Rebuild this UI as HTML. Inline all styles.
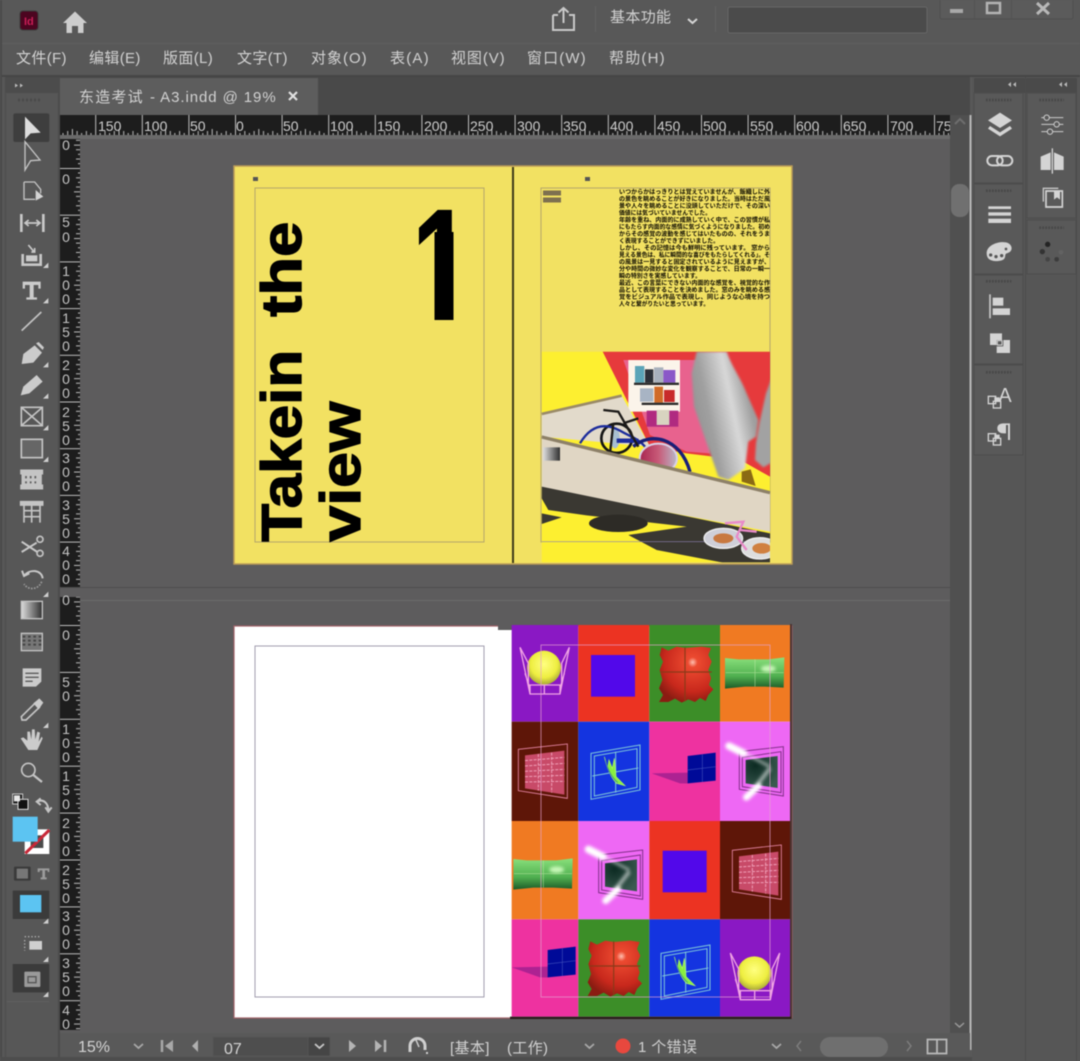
<!DOCTYPE html>
<html><head><meta charset="utf-8"><title>InDesign</title>
<style>
html,body{margin:0;padding:0;background:#5a5a5a;width:1080px;height:1061px;overflow:hidden}
svg{display:block;filter:blur(.45px)}
text{font-family:"Liberation Sans","Noto Sans CJK SC",sans-serif}
.m{font-size:15px;fill:#d2d2d2;letter-spacing:.35px}
.r{font-size:14px;fill:#cfcfcf}
.v{font-size:14px;fill:#c4c4c4;text-anchor:middle}
.j{font-size:6px;fill:#0c0a00;font-family:"Liberation Sans","Noto Sans CJK JP",sans-serif;font-weight:bold}
.i{fill:#cbcbcb}
.o{fill:none;stroke:#c4c4c4;stroke-width:5}
.t{fill:#d4d4d4}
.g{fill:none;stroke:#474747;stroke-width:8;stroke-dasharray:5 4}
</style></head><body>
<svg xmlns="http://www.w3.org/2000/svg" width="1080" height="1061" viewBox="0 0 1080 1061">
<defs>
<pattern id="pt" patternUnits="userSpaceOnUse" x="235" y="115" width="46.6" height="20">
<rect width="46.6" height="20" fill="#1d1d1d"/>
<path d="M.5 0V20M9.8 16V20M19.1 16V20M28.5 16V20M37.8 16V20M5 18V20M14.4 18V20M23.8 14V20M33 18V20M42.4 18V20" stroke="#bdbdbd" fill="none"/>
</pattern>
<pattern id="pl1" patternUnits="userSpaceOnUse" x="60" y="168" width="20" height="46.7">
<rect width="20" height="46.7" fill="#1d1d1d"/>
<path d="M0 .5H20M16 9.8H20M16 19H20M14 23.8H20M16 28.5H20M16 37.8H20M18 5H20M18 14.4H20M18 33H20M18 42.4H20" stroke="#bdbdbd" fill="none"/>
</pattern>
<pattern id="pl2" patternUnits="userSpaceOnUse" x="60" y="625" width="20" height="46.9">
<rect width="20" height="46.9" fill="#1d1d1d"/>
<path d="M0 .5H20M16 9.8H20M16 19H20M14 23.8H20M16 28.5H20M16 37.8H20M18 5H20M18 14.4H20M18 33H20M18 42.4H20" stroke="#bdbdbd" fill="none"/>
</pattern>
<clipPath id="ctop"><rect x="60" y="115" width="890" height="20"/></clipPath>
<clipPath id="cill"><rect x="95" y="575" width="685" height="632"/></clipPath>
<clipPath id="cone"><rect x="400" y="200" width="53.500" height="60"/></clipPath>
<filter id="soft" x="-30%" y="-30%" width="160%" height="160%"><feGaussianBlur stdDeviation="4.500"/></filter>
<filter id="soft3" x="-10%" y="-10%" width="120%" height="120%"><feGaussianBlur stdDeviation="3"/></filter>
<radialGradient id="sph" cx=".5" cy=".4" r=".6"><stop offset="0" stop-color="#ffff80"/><stop offset=".65" stop-color="#eeee40"/><stop offset="1" stop-color="#a8a838"/></radialGradient>
<radialGradient id="pil" cx=".62" cy=".28" r=".75"><stop offset="0" stop-color="#ffc0b0"/><stop offset=".12" stop-color="#ec4a30"/><stop offset=".7" stop-color="#c8281c"/><stop offset="1" stop-color="#8a1c12"/></radialGradient>
<linearGradient id="gp" x1="0" y1="0" x2="0" y2="1"><stop offset="0" stop-color="#8ae07c"/><stop offset=".6" stop-color="#50b050"/><stop offset="1" stop-color="#1c5a28"/></linearGradient>
<linearGradient id="gr" x1="0" x2="1"><stop offset="0" stop-color="#dcdcdc"/><stop offset="1" stop-color="#303030"/></linearGradient>
<linearGradient id="gw" x1="0" y1=".7" x2="1" y2=".3"><stop offset="0" stop-color="#8e8e8e"/><stop offset=".3" stop-color="#a0a0a0"/><stop offset=".62" stop-color="#d8d8d8"/><stop offset=".85" stop-color="#a0a0a0"/><stop offset="1" stop-color="#989898"/></linearGradient>
<radialGradient id="dk" cx=".3" cy=".3" r=".8"><stop offset="0" stop-color="#0c2a22"/><stop offset="1" stop-color="#3a5a50"/></radialGradient>
<linearGradient id="ball" x1="0" x2="1"><stop offset="0" stop-color="#a82650"/><stop offset=".5" stop-color="#c85a78"/><stop offset="1" stop-color="#b8b8c8"/></linearGradient>
<g id="sphere">
<circle cx="117" cy="143" r="51" fill="url(#sph)"/>
<path d="M45 82L75 222H165L193 82L170 130V195H70V130ZM75 222V195M165 222V195M60 160L75 205M178 160L165 205M118 195V222" fill="none" stroke="#f0a4e4" stroke-width="4"/>
</g>
<rect id="psq" x="258" y="105" width="132" height="125" fill="#5208ea"/>
<g id="rpil">
<path d="M470 82L490 92L515 80L540 84L590 80L618 84L610 105L620 125L610 150L618 175L612 195L625 208L610 225L602 243L585 234L570 246L550 238L530 248L510 236L490 246L462 246L474 225L462 205L472 180L464 150L474 125L464 105Z" fill="url(#pil)"/>
<path d="M540 82V244M466 156H620" stroke="#8a3a18" stroke-width="3.500" fill="none"/>
</g>
<g id="gpil"><path d="M660 114L700 118L790 118L838 112L836 203L780 200L720 200L660 206Z" fill="url(#gp)"/><ellipse cx="790" cy="146" rx="22" ry="10" fill="#c8f8b8" filter="url(#soft)"/><path d="M662 158H836M750 118V200" stroke="#c0e8a8" stroke-width="2" fill="none" opacity=".7"/></g>
<g id="brick">
<path d="M40 388L187 372V535L40 512Z" fill="none" stroke="#e888a8" stroke-width="2.500"/>
<path d="M60 406L178 392V524L60 505Z" fill="#c84a68"/>
<path d="M60 422L178 412M60 438L178 430M60 454L178 448M60 470L178 466M60 486L178 484M100 402V512M140 398V518" stroke="#f0a0b8" stroke-width="3" stroke-dasharray="9 4" fill="none"/>
</g>
<g id="bwin">
<path d="M258 400L405 375V510L258 538ZM268 408L396 386V502L268 528ZM332 395V518M262 468L400 444" fill="none" stroke="#80c8d8" stroke-width="3"/>
<path d="M298 410C305 440 315 470 335 490L360 497L350 487L333 470L328 415L322 445L312 420L308 445Z" fill="#88ee40" stroke="#b0ff60" stroke-width="2"/>
<path d="M302 420C308 450 320 472 338 488" stroke="#2c6ca0" stroke-width="2" fill="none"/>
</g>
<g id="dwin">
<path d="M440 460L550 458V490L632 492L525 490Z" fill="#8a1a8a" opacity=".65"/>
<path d="M548 408L632 398V482L548 490Z" fill="#000a98"/>
<path d="M592 403V486M548 450L632 440" stroke="#3848b8" stroke-width="2" fill="none"/>
</g>
<g id="lwin">
<path d="M703 395L835 380V528L703 508Z" fill="none" stroke="#803088" stroke-width="3"/>
<path d="M712 412L828 395V518L712 500Z" fill="none" stroke="#803088" stroke-width="3"/>
<path d="M722 420L818 408V504L722 490Z" fill="url(#dk)"/>
<g filter="url(#soft)">
<path d="M720 400L795 440" stroke="#fff" stroke-width="8" fill="none" opacity=".55"/>
<path d="M672 378L716 400" stroke="#fff" stroke-width="22" stroke-linecap="round"/>
<path d="M795 445L760 490" stroke="#fff" stroke-width="12" fill="none" opacity=".55"/>
<path d="M760 498L724 532" stroke="#fff" stroke-width="20" stroke-linecap="round"/>
</g>
</g>
<g id="tri"><path d="M0 0L-16 16H0Z" fill="#cfcfcf"/></g>
</defs>

<!-- base -->
<rect width="1080" height="1061" fill="#585858"/>
<rect y="43" width="1080" height="1" fill="#5f5f5f"/>
<rect y="75" width="1080" height="2" fill="#464646"/>
<rect x="0" y="0" width="2" height="1061" fill="#4a4a4a"/>

<!-- title bar -->
<rect x="20" y="11" width="18" height="19" rx="3" fill="#4c0520" stroke="#3a3a3a"/>
<text x="24" y="25" font-size="11" font-weight="bold" fill="#c81e56">Id</text>
<path d="M75 11.500L87 23H83.500V33H78V26H72V33H66.500V23H63Z" fill="#cdcdcd"/>
<path d="M553 15H558M569 15H574V30H553V15M563.500 23V8M558.500 12.500L563.500 8L568.500 12.500" fill="none" stroke="#c8c8c8" stroke-width="2"/>
<rect x="595" y="6" width="1" height="26" fill="#636363"/>
<text x="610" y="22" class="m">基本功能</text>
<path d="M688 19L692.500 23L697 19" fill="none" stroke="#d4d4d4" stroke-width="2"/>
<rect x="715" y="6" width="1" height="26" fill="#636363"/>
<rect x="728" y="7" width="199" height="26" rx="2" fill="#4b4b4b" stroke="#676767"/>
<rect x="940" y="-2" width="133" height="21" rx="2" fill="#5b5b5b" stroke="#4e4e4e"/>
<path d="M974.500 0V19M1011.500 0V19" stroke="#525252"/>
<rect x="950" y="9" width="13" height="4" fill="#a8a8a8"/>
<rect x="987" y="3" width="13" height="10" fill="none" stroke="#b4b4b4" stroke-width="2.500"/>
<path d="M1037 3L1049 14M1049 3L1037 14" stroke="#b8b8b8" stroke-width="3"/>

<!-- menu -->
<text x="16" y="63" class="m">文件(F)</text>
<text x="89" y="63" class="m">编辑(E)</text>
<text x="163" y="63" class="m">版面(L)</text>
<text x="237" y="63" class="m">文字(T)</text>
<text x="311" y="63" class="m" textLength="56">对象(O)</text>
<text x="390" y="63" class="m" textLength="39">表(A)</text>
<text x="451" y="63" class="m" textLength="54">视图(V)</text>
<text x="527" y="63" class="m" textLength="59">窗口(W)</text>
<text x="609" y="63" class="m" textLength="56">帮助(H)</text>

<!-- tab bar -->
<rect x="60" y="77" width="910" height="38" fill="#494949"/>
<rect x="60" y="78" width="258" height="37" fill="#5d5d5d"/>
<text x="79" y="102" class="m" textLength="64">东造考试</text>
<text x="150" y="102" class="m" textLength="126">- A3.indd @ 19%</text>
<path d="M289 92L297 100M297 92L289 100" stroke="#e0e0e0" stroke-width="2.200"/>

<!-- pasteboard -->
<rect x="60" y="135" width="890" height="898" fill="#5d5c5d"/>
<rect x="60" y="135" width="890" height="4" fill="#6a6a6a"/>
<rect x="60" y="587" width="890" height="1" fill="#4d4d4d"/>
<rect x="60" y="600" width="890" height="1" fill="#6b6b6b"/>

<!-- top ruler -->
<rect x="60" y="115" width="890" height="20" fill="url(#pt)"/>
<g clip-path="url(#ctop)">
<text x="98" y="131" class="r">150</text><text x="144" y="131" class="r">100</text><text x="190" y="131" class="r">50</text><text x="236" y="131" class="r">0</text><text x="283" y="131" class="r">50</text><text x="330" y="131" class="r">100</text><text x="377" y="131" class="r">150</text><text x="424" y="131" class="r">200</text><text x="470" y="131" class="r">250</text><text x="517" y="131" class="r">300</text><text x="563" y="131" class="r">350</text><text x="610" y="131" class="r">400</text><text x="657" y="131" class="r">450</text><text x="703" y="131" class="r">500</text><text x="750" y="131" class="r">550</text><text x="796" y="131" class="r">600</text><text x="843" y="131" class="r">650</text><text x="890" y="131" class="r">700</text><text x="936" y="131" class="r">750</text>
</g>

<!-- left rulers -->
<rect x="60" y="139" width="20" height="448" fill="url(#pl1)"/>
<rect x="60" y="597" width="20" height="433" fill="url(#pl2)"/>
<g class="vv">
<text x="66" y="150" class="v">0</text><text x="66" y="184" class="v">0</text>
<text x="66" y="227" class="v">5</text><text x="66" y="242" class="v">0</text>
<text x="66" y="276" class="v">1</text><text x="66" y="290" class="v">0</text><text x="66" y="304" class="v">0</text>
<text x="66" y="323" class="v">1</text><text x="66" y="337" class="v">5</text><text x="66" y="351" class="v">0</text>
<text x="66" y="370" class="v">2</text><text x="66" y="384" class="v">0</text><text x="66" y="398" class="v">0</text>
<text x="66" y="417" class="v">2</text><text x="66" y="431" class="v">5</text><text x="66" y="445" class="v">0</text>
<text x="66" y="463" class="v">3</text><text x="66" y="477" class="v">0</text><text x="66" y="491" class="v">0</text>
<text x="66" y="510" class="v">3</text><text x="66" y="524" class="v">5</text><text x="66" y="538" class="v">0</text>
<text x="66" y="556" class="v">4</text><text x="66" y="570" class="v">0</text><text x="66" y="584" class="v">0</text>
<text x="66" y="605" class="v">0</text><text x="66" y="640" class="v">0</text>
<text x="66" y="687" class="v">5</text><text x="66" y="701" class="v">0</text>
<text x="66" y="734" class="v">1</text><text x="66" y="748" class="v">0</text><text x="66" y="762" class="v">0</text>
<text x="66" y="781" class="v">1</text><text x="66" y="795" class="v">5</text><text x="66" y="809" class="v">0</text>
<text x="66" y="828" class="v">2</text><text x="66" y="842" class="v">0</text><text x="66" y="856" class="v">0</text>
<text x="66" y="875" class="v">2</text><text x="66" y="889" class="v">5</text><text x="66" y="903" class="v">0</text>
<text x="66" y="921" class="v">3</text><text x="66" y="935" class="v">0</text><text x="66" y="949" class="v">0</text>
<text x="66" y="968" class="v">3</text><text x="66" y="982" class="v">5</text><text x="66" y="996" class="v">0</text>
<text x="66" y="1015" class="v">4</text><text x="66" y="1029" class="v">0</text>
</g>

<!-- spread 1 -->
<rect x="234" y="166" width="558" height="398" fill="#f2e162" stroke="#b99a58" stroke-width="1.500"/>
<rect x="255" y="188" width="229" height="354" fill="none" stroke="#b5a76a"/>
<rect x="512" y="167" width="2" height="396" fill="#3e3a18"/>
<rect x="253" y="177" width="5" height="4" fill="#555"/>
<rect x="585" y="177" width="5" height="4" fill="#555"/>
<g font-weight="bold" fill="#000" stroke="#000" stroke-width="1.300">
<text transform="translate(301,541.700) rotate(-90)" font-size="57" textLength="192" lengthAdjust="spacingAndGlyphs">Takein</text>
<text transform="translate(301,316.700) rotate(-90)" font-size="57" textLength="95" lengthAdjust="spacingAndGlyphs">the</text>
<text transform="translate(360,541.700) rotate(-90)" font-size="57" textLength="140" lengthAdjust="spacingAndGlyphs">view</text>
</g>
<g clip-path="url(#cone)"><text transform="translate(411.500,320) scale(.68,1)" font-size="160" font-weight="bold" fill="#000">1</text></g>
<rect x="434.500" y="232" width="19" height="88" fill="#000"/>
<rect x="541" y="188" width="229" height="354" fill="none" stroke="#b5a76a"/>
<rect x="543" y="190.500" width="18" height="5" fill="#7d7050"/>
<rect x="543" y="197.500" width="18" height="5" fill="#7d7050"/>
<g>
<text x="619" y="194" class="j" textLength="151" lengthAdjust="spacingAndGlyphs">いつからかはっきりとは覚えていませんが、飯織しに外</text>
<text x="619" y="201" class="j" textLength="151" lengthAdjust="spacingAndGlyphs">の景色を眺めることが好きになりました。当時はただ風</text>
<text x="619" y="208" class="j" textLength="151" lengthAdjust="spacingAndGlyphs">景や人々を眺めることに没頭していただけで、その深い</text>
<text x="619" y="215" class="j" textLength="92" lengthAdjust="spacingAndGlyphs">価値には気づいていませんでした。</text>
<text x="619" y="222" class="j" textLength="151" lengthAdjust="spacingAndGlyphs">年齢を重ね、内面的に成熟していく中で、この習慣が私</text>
<text x="619" y="229" class="j" textLength="151" lengthAdjust="spacingAndGlyphs">にもたらす内面的な感情に気づくようになりました。初め</text>
<text x="619" y="236" class="j" textLength="151" lengthAdjust="spacingAndGlyphs">からその感覚の波動を感じてはいたものの、それをうま</text>
<text x="619" y="243" class="j" textLength="100" lengthAdjust="spacingAndGlyphs">く表現することができずにいました。</text>
<text x="619" y="250" class="j" textLength="151" lengthAdjust="spacingAndGlyphs">しかし、その記憶は今も鮮明に残っています。 窓から</text>
<text x="619" y="257" class="j" textLength="151" lengthAdjust="spacingAndGlyphs">見える景色は、私に瞬間的な喜びをもたらしてくれる」。そ</text>
<text x="619" y="264" class="j" textLength="151" lengthAdjust="spacingAndGlyphs">の風景は一見すると固定されているように見えますが、</text>
<text x="619" y="271" class="j" textLength="151" lengthAdjust="spacingAndGlyphs">分や時間の微妙な変化を観察することで、日常の一瞬一</text>
<text x="619" y="278" class="j" textLength="82" lengthAdjust="spacingAndGlyphs">瞬の特別さを実感しています。</text>
<text x="619" y="285" class="j" textLength="151" lengthAdjust="spacingAndGlyphs">最近、この言葉にできない内面的な感覚を、視覚的な作</text>
<text x="619" y="292" class="j" textLength="151" lengthAdjust="spacingAndGlyphs">品として表現することを決めました。窓のみを眺める感</text>
<text x="619" y="299" class="j" textLength="151" lengthAdjust="spacingAndGlyphs">覚をビジュアル作品で表現し、同じような心境を持つ</text>
<text x="619" y="306" class="j" textLength="90" lengthAdjust="spacingAndGlyphs">人々と繋がりたいと思っています。</text>
</g>

<!-- page 1 illustration -->
<g transform="translate(510,160) scale(.33333)">
<g clip-path="url(#cill)">
<rect x="95" y="575" width="685" height="632" fill="#fdef30"/>
<path d="M278 575H780V950L700 905L610 890L530 880L420 860Z" fill="#e63a3c"/>
<path d="M340 600H560L600 880L530 875L420 825Z" fill="#e8628e"/>
<rect x="355" y="600" width="155" height="155" fill="#fbf4ea"/>
<rect x="375" y="618" width="28" height="50" fill="#5aa4b8"/><rect x="405" y="628" width="25" height="40" fill="#2c3038"/><rect x="432" y="622" width="28" height="46" fill="#a8b0bc"/><rect x="460" y="630" width="36" height="38" fill="#8a58c8"/>
<rect x="372" y="668" width="135" height="7" fill="#2a2a2a"/>
<rect x="390" y="685" width="40" height="40" fill="#a8b4c4"/><rect x="433" y="680" width="26" height="48" fill="#d06a28"/><rect x="462" y="690" width="32" height="36" fill="#c82a2a"/>
<rect x="395" y="728" width="110" height="7" fill="#2a2a2a"/>
<rect x="410" y="752" width="95" height="48" fill="#b02a80"/><rect x="440" y="750" width="38" height="45" fill="#d8d4c0"/>
<path d="M95 762L335 707L420 860L95 830Z" fill="#e2dacb"/>
<path d="M95 762L335 707" stroke="#9a8a68" stroke-width="8"/>
<g filter="url(#soft3)">
<path d="M790 640L768 700L748 790L738 850L735 900L760 922L790 905Z" fill="#a2a2a2"/>
<path d="M560 575H650C665 620 690 650 710 700L745 780L738 830L715 845L705 925L655 960L625 950L590 850L552 740L545 640Z" fill="url(#gw)"/>
</g>
<path d="M695 935L722 928L737 978L695 965Z" fill="#8a6a14"/>
<ellipse cx="320" cy="835" rx="46" ry="44" fill="none" stroke="#151515" stroke-width="8"/>
<ellipse cx="315" cy="835" rx="14" ry="30" fill="#a8c0d0"/>
<path d="M210 850C240 800 280 785 330 812C360 830 385 835 405 860" fill="none" stroke="#1c2c9c" stroke-width="7"/>
<path d="M320 842H385" stroke="#1c2c9c" stroke-width="13"/>
<path d="M370 860C420 815 510 830 540 935" fill="none" stroke="#181f78" stroke-width="10"/>
<ellipse cx="445" cy="895" rx="56" ry="44" fill="url(#ball)" stroke="#d8d0e8" stroke-width="6"/>
<path d="M280 750L325 755L385 860M310 790L300 880M340 790L385 775" fill="none" stroke="#1c1a18" stroke-width="7"/>
<path d="M95 830L780 997V1115L95 985Z" fill="#e0d6c4"/>
<path d="M95 831L780 998" stroke="#8d8068" stroke-width="10"/>
<rect x="100" y="862" width="50" height="40" fill="url(#gr)"/>
<path d="M95 980L780 1120V1210H650L440 1170L355 1125L530 1100L230 1066L115 1050L95 1015Z" fill="#3a3832"/>
<path d="M95 1060L155 1072L95 1092Z" fill="#3a3832"/>
<ellipse cx="325" cy="1090" rx="88" ry="26" fill="#2d2b26"/>
<path d="M95 1145L780 1145" stroke="#8a80b0" stroke-width="2"/>
<ellipse cx="640" cy="1135" rx="58" ry="30" fill="#cfcfd8" stroke="#eee" stroke-width="4"/>
<ellipse cx="640" cy="1135" rx="30" ry="15" fill="#c87840"/>
<ellipse cx="750" cy="1165" rx="55" ry="32" fill="#ddd" stroke="#eee" stroke-width="4"/>
<ellipse cx="755" cy="1165" rx="28" ry="16" fill="#d08040"/>
<path d="M645 1090L700 1085L680 1130L710 1170M690 1110L740 1115" fill="none" stroke="#e88ac8" stroke-width="7"/>
</g>
</g>

<!-- spread 2 -->
<rect x="234" y="626" width="558" height="392" fill="#fff" stroke="#a16268" stroke-width="1.200"/>
<rect x="498" y="625" width="14" height="5" fill="#5d5c5d"/>
<rect x="255" y="646" width="229" height="351" fill="none" stroke="#a19eae"/>
<g transform="translate(505,620) scale(.33333)">
<rect x="855" y="12" width="6" height="1185" fill="#4a3434"/>
<rect x="20" y="15" width="200" height="290" fill="#8a18c4"/><rect x="220" y="15" width="213" height="290" fill="#ec3322"/><rect x="433" y="15" width="212" height="290" fill="#3c8e28"/><rect x="645" y="15" width="210" height="290" fill="#f07a22"/>
<rect x="20" y="305" width="200" height="298" fill="#5e1608"/><rect x="220" y="305" width="213" height="298" fill="#1434e0"/><rect x="433" y="305" width="212" height="298" fill="#ee32a0"/><rect x="645" y="305" width="210" height="298" fill="#ee68f4"/>
<rect x="20" y="603" width="200" height="295" fill="#f07a22"/><rect x="220" y="603" width="213" height="295" fill="#ee68f4"/><rect x="433" y="603" width="212" height="295" fill="#ec3322"/><rect x="645" y="603" width="210" height="295" fill="#5e1608"/>
<rect x="20" y="898" width="200" height="292" fill="#ee32a0"/><rect x="220" y="898" width="213" height="292" fill="#3c8e28"/><rect x="433" y="898" width="212" height="292" fill="#1434e0"/><rect x="645" y="898" width="210" height="292" fill="#8a18c4"/>
<rect x="15" y="1190" width="843" height="7" fill="#2a1a1a"/>
<use href="#sphere"/><use href="#sphere" transform="translate(631,917)"/>
<use href="#psq"/><use href="#psq" transform="translate(215,587)"/>
<use href="#rpil"/><use href="#rpil" transform="translate(-214,882)"/>
<use href="#gpil"/><use href="#gpil" transform="translate(-635,603)"/>
<use href="#brick"/><use href="#brick" transform="translate(642,303)"/>
<use href="#bwin"/><use href="#bwin" transform="translate(210,600)"/>
<use href="#dwin"/><use href="#dwin" transform="translate(-420,582)"/>
<use href="#lwin"/><use href="#lwin" transform="translate(-422,310)"/>
<rect x="108" y="75" width="687" height="1056" fill="none" stroke="#e4a0d0" stroke-width="2.500" opacity=".8"/>
</g>

<!-- left toolbar -->
<rect x="2" y="77" width="58" height="984" fill="#575757"/>
<rect x="5" y="77" width="1" height="984" fill="#4c4c4c"/>
<rect x="6" y="77" width="52" height="16" fill="#4c4c4c"/>
<rect x="58" y="77" width="2" height="984" fill="#4c4c4c"/>
<path d="M15 83.500L18 85.500L15 87.500ZM20 83.500L23 85.500L20 87.500Z" fill="#bcbcbc"/>
<path d="M18 100H42" fill="none" stroke="#4a4a4a" stroke-width="3" stroke-dasharray="2 2"/>
<g transform="translate(0,100) scale(.33333)">
<rect x="40" y="40" width="108" height="86" rx="6" fill="#3e3e3e"/>
<path d="M75 50L122 98L92 100L75 118Z" fill="#dcdcdc"/>
<path d="M75 125L120 180L92 182L75 210Z" class="o" style="stroke-width:4"/>
<path d="M72 246H104L122 268V280M72 246V298H105" class="o" style="stroke-width:4"/><path d="M107 270L130 290L107 302Z" fill="#d4d4d4"/>
<path d="M64 342V396M130 342V396" fill="none" stroke="#c8c8c8" stroke-width="8"/>
<path d="M75 369H120M86 360L75 369L86 378M109 360L120 369L109 378" fill="none" stroke="#c8c8c8" stroke-width="5"/>
<path d="M68 462V494H122V462" fill="none" stroke="#c8c8c8" stroke-width="8"/><path d="M78 466H112V484H78Z" class="i"/><path d="M85 435L102 455M94 456H104V444" fill="none" stroke="#c8c8c8" stroke-width="5"/>
<path d="M68 545H122V566H115V555H101V592H111V599H79V592H89V555H75V566H68Z" class="i"/>
<path d="M65 692L124 636" fill="none" stroke="#c4c4c4" stroke-width="5"/>
<path d="M65 792L70 762L104 736L126 758L100 788Z" class="i"/><path d="M108 730L116 726L132 742L128 750Z" class="i"/>
<path d="M62 886L70 860L110 825L128 845L88 880Z" class="i"/>
<path d="M64 922H127V977H64ZM64 922L127 977M127 922L64 977" class="o"/>
<rect x="64" y="1018" width="63" height="55" fill="#666" stroke="#c4c4c4" stroke-width="5"/>
<path d="M62 1110H128V1122H62ZM62 1155H128V1167H62ZM66 1122V1155H124V1122M66 1138H124" fill="#c4c4c4" stroke="#c4c4c4" stroke-width="3"/>
<path d="M78 1128V1135M92 1128V1135M106 1128V1135M78 1144V1150M92 1144V1150M106 1144V1150" stroke="#5a5a5a" stroke-width="5"/>
<path d="M62 1205H128V1215H62ZM72 1215V1268M95 1215V1268M120 1215V1268M72 1232H120M72 1250H120" fill="#c4c4c4" stroke="#c4c4c4" stroke-width="5"/>
<use href="#tri" transform="translate(145,488)"/><use href="#tri" transform="translate(145,594)"/><use href="#tri" transform="translate(145,786)"/><use href="#tri" transform="translate(145,880)"/><use href="#tri" transform="translate(145,975)"/><use href="#tri" transform="translate(145,1070)"/>
</g>
<g transform="translate(0,540) scale(.33333)">
<path d="M65 5L112 36M65 36L110 8" fill="none" stroke="#c8c8c8" stroke-width="6"/>
<circle cx="120" cy="-2" r="9" class="o"/><circle cx="120" cy="40" r="9" class="o"/>
<path d="M66 92L72 108L88 100M72 108C90 85 125 90 128 115" fill="none" stroke="#c8c8c8" stroke-width="6"/>
<path d="M125 125C115 150 85 152 72 132" fill="none" stroke="#9a9a9a" stroke-width="5" stroke-dasharray="5 4"/>
<use href="#tri" transform="translate(145,155)"/>
<rect x="64" y="184" width="63" height="52" fill="url(#gr)" stroke="#c4c4c4" stroke-width="4"/>
<rect x="64" y="280" width="63" height="52" fill="#777" stroke="#c4c4c4" stroke-width="4"/>
<path d="M68 290H124M68 302H124M68 314H124" stroke="#454545" stroke-width="6" stroke-dasharray="8 8" fill="none"/>
<path d="M68 385H124V425L108 440H68Z" class="i"/><path d="M76 400H116M76 412H116M76 424H98" stroke="#5a5a5a" stroke-width="4"/>
<path d="M64 530L105 490L118 502L78 540L66 540Z" fill="none" stroke="#c4c4c4" stroke-width="5"/><path d="M100 490L118 475L130 488L116 508Z" class="i"/>
<use href="#tri" transform="translate(145,548)"/>
<path d="M72 610L62 595L70 592L82 602L82 575L90 575L94 598L96 568L104 568L106 598L112 575L120 578L116 605L125 590L128 595L112 630H85Z" class="i"/>
<circle cx="85" cy="690" r="20" fill="none" stroke="#c4c4c4" stroke-width="5"/><path d="M100 705L126 726" stroke="#c4c4c4" stroke-width="7"/>
<rect x="38" y="762" width="30" height="30" fill="#1d1d1d" stroke="#ccc" stroke-width="3"/>
<rect x="54" y="778" width="30" height="30" fill="#111" stroke="#ddd" stroke-width="3"/>
<rect x="42" y="766" width="18" height="18" fill="#e8e8e8"/>
<path d="M112 785C130 775 145 790 145 812M136 802L145 815L155 802M122 775L110 785L122 795" fill="none" stroke="#c4c4c4" stroke-width="6"/>
<rect x="74" y="868" width="74" height="74" fill="#fff"/><rect x="92" y="886" width="38" height="38" fill="#4a4a4a"/><path d="M76 940L148 870" stroke="#c82838" stroke-width="9"/>
<rect x="38" y="830" width="75" height="75" fill="#5cc4f2"/>
<rect x="42" y="980" width="50" height="42" rx="3" fill="#3a3a3a"/><rect x="50" y="986" width="34" height="30" rx="2" fill="#777"/>
<path d="M113 985H148V996H143V991H135V1012H140V1018H122V1012H127V991H119V996H113Z" fill="#9c9c9c"/>
<rect x="38" y="1052" width="110" height="85" rx="2" fill="#3b3b3b"/><rect x="60" y="1065" width="64" height="52" fill="#5cc4f2"/><use href="#tri" transform="translate(145,1135)"/>
<rect x="88" y="1203" width="38" height="26" fill="#cfcfcf"/><path d="M74 1190H122M74 1200V1232" stroke="#b0b0b0" stroke-width="4" stroke-dasharray="4 6" fill="none"/><use href="#tri" transform="translate(145,1250)"/>
<rect x="38" y="1272" width="110" height="85" rx="2" fill="#3b3b3b"/><rect x="73" y="1295" width="48" height="46" rx="3" fill="#9a9a9a"/><rect x="84" y="1310" width="24" height="18" fill="none" stroke="#555" stroke-width="4"/><use href="#tri" transform="translate(145,1355)"/>
<rect x="20" y="1384" width="128" height="2" fill="#636363"/>
</g>

<!-- vertical scrollbar -->
<rect x="950" y="115" width="20" height="918" fill="#505050"/>
<path d="M955 124L960 119L965 124" fill="none" stroke="#6e6e6e" stroke-width="2"/>
<rect x="951" y="184" width="18" height="33" rx="8" fill="#707070"/>
<path d="M955 1023L959.500 1027L964 1023" fill="none" stroke="#9a9a9a" stroke-width="1.500"/>
<rect x="969.500" y="115" width="2" height="935" fill="#b8b8b8"/>

<!-- status bar -->
<rect x="60" y="1033" width="910" height="24" fill="#595959"/>
<rect x="0" y="1057" width="1080" height="4" fill="#4d4d4d"/>
<text x="78" y="1052" font-size="16" fill="#d4d4d4">15%</text>
<path d="M134 1044L138.500 1048L143 1044" fill="none" stroke="#a8a8a8" stroke-width="1.800"/>
<path d="M162 1040V1052" stroke="#a8a8a8" stroke-width="2.500"/><path d="M173 1040V1052L165 1046Z" fill="#a8a8a8"/>
<path d="M198 1040V1052L192 1046Z" fill="#b0b0b0"/>
<rect x="213" y="1037" width="95" height="19" fill="#4e4e4e" stroke="#555"/>
<rect x="308" y="1037" width="22" height="19" fill="#454545" stroke="#555"/>
<text x="224" y="1054" font-size="16" fill="#d4d4d4">07</text>
<path d="M315 1044L319.500 1048L324 1044" fill="none" stroke="#c8c8c8" stroke-width="1.800"/>
<path d="M349 1040V1052L356 1046Z" fill="#b4b4b4"/>
<path d="M375 1040V1052L382 1046Z" fill="#b4b4b4"/><path d="M385 1040V1052" stroke="#b4b4b4" stroke-width="2.500"/>
<path d="M410 1052V1046A7.500 7.500 0 0 1 425 1046V1050" fill="none" stroke="#cfcfcf" stroke-width="3"/><path d="M416 1040L419 1047" stroke="#cfcfcf" stroke-width="1.500"/><rect x="426" y="1052" width="2" height="2" fill="#cfcfcf"/>
<text x="450" y="1053" class="m">[基本]</text>
<text x="507" y="1053" class="m">(工作)</text>
<path d="M585 1044L589.500 1048L594 1044" fill="none" stroke="#a8a8a8" stroke-width="1.800"/>
<circle cx="623" cy="1046" r="7.500" fill="#e8483e"/>
<text x="638" y="1052" class="m">1 个错误</text>
<path d="M772 1044L776.500 1048L781 1044" fill="none" stroke="#a8a8a8" stroke-width="1.800"/>
<path d="M801 1041L797 1046L801 1051" fill="none" stroke="#7c7c7c" stroke-width="1.500"/>
<rect x="820" y="1037" width="68" height="20" rx="10" fill="#6f6f6f"/>
<path d="M907 1041L911 1046L907 1051" fill="none" stroke="#7c7c7c" stroke-width="1.500"/>
<rect x="927.500" y="1039.500" width="19" height="14" fill="none" stroke="#b8b8b8" stroke-width="1.800"/><path d="M937 1039V1054" stroke="#b8b8b8" stroke-width="1.800"/>

<!-- right panels -->
<rect x="972" y="77" width="108" height="984" fill="#565656"/>
<rect x="974" y="78" width="103" height="15" fill="#4a4a4a"/>
<rect x="974" y="93" width="49" height="90" fill="#595959" stroke="#4c4c4c"/>
<rect x="974" y="184" width="49" height="90" fill="#595959" stroke="#4c4c4c"/>
<rect x="974" y="275" width="49" height="89" fill="#595959" stroke="#4c4c4c"/>
<rect x="974" y="365" width="49" height="90" fill="#595959" stroke="#4c4c4c"/>
<rect x="1027" y="93" width="49" height="125" fill="#595959" stroke="#4c4c4c"/>
<rect x="1027" y="220" width="49" height="54" fill="#595959" stroke="#4c4c4c"/>
<rect x="1025" y="77" width="1" height="984" fill="#4c4c4c"/>
<rect x="1076" y="93" width="1" height="968" fill="#4c4c4c"/>
<path d="M1011 82L1008 84.500L1011 87ZM1016 82L1013 84.500L1016 87ZM1062 82L1059 84.500L1062 87ZM1067 82L1064 84.500L1067 87Z" fill="#bcbcbc"/>
<g transform="translate(940,75) scale(.33333)">
<path d="M138 75H214M298 75H372M138 347H214M298 458H372M138 619H214M138 892H214" class="g"/>
<path d="M180 113L216 136L180 159L144 136Z" class="t"/><path d="M150 153L180 172L210 153L216 161L180 184L144 161Z" class="t"/>
<rect x="142" y="243" width="46" height="28" rx="14" fill="none" stroke="#d4d4d4" stroke-width="6"/><rect x="171" y="243" width="46" height="28" rx="14" fill="none" stroke="#d4d4d4" stroke-width="6"/>
<rect x="145" y="394" width="68" height="8" class="t"/><rect x="145" y="412" width="68" height="10" class="t"/><rect x="145" y="431" width="68" height="13" class="t"/>
<path d="M140 535C140 510 175 498 198 502C218 506 222 530 200 535C190 538 205 555 175 558C150 560 140 550 140 535Z" class="t"/>
<circle cx="152" cy="540" r="5" fill="#555"/><circle cx="168" cy="545" r="5" fill="#555"/><circle cx="185" cy="542" r="5" fill="#555"/><circle cx="198" cy="522" r="4" fill="#555"/>
<path d="M150 658V730" stroke="#c8c8c8" stroke-width="5"/><rect x="158" y="668" width="32" height="24" class="t"/><rect x="158" y="700" width="52" height="20" class="t"/>
<path d="M150 775H186V795H170V810H150Z" class="t"/><path d="M190 795H210V834H170V814H190Z" class="t"/><rect x="172" y="797" width="14" height="13" fill="none" stroke="#d4d4d4" stroke-width="3"/>
<text x="175" y="981" font-size="60" fill="#d4d4d4">A</text>
<rect x="145" y="964" width="22" height="22" fill="none" stroke="#d4d4d4" stroke-width="4"/><rect x="160" y="979" width="22" height="20" fill="none" stroke="#d4d4d4" stroke-width="4"/><rect x="163" y="967" width="16" height="14" fill="#d4d4d4"/>
<path d="M172 1060C172 1048 182 1045 192 1045H210V1095H204V1050H198V1075H192C180 1075 172 1070 172 1060Z" class="t"/>
<rect x="145" y="1076" width="22" height="22" fill="none" stroke="#d4d4d4" stroke-width="4"/><rect x="160" y="1090" width="22" height="20" fill="none" stroke="#d4d4d4" stroke-width="4"/><rect x="163" y="1079" width="16" height="13" fill="#d4d4d4"/>
<path d="M304 128H370M304 148H370M304 170H370" stroke="#cdcdcd" stroke-width="3"/>
<circle cx="320" cy="128" r="8" fill="#595959" stroke="#cdcdcd" stroke-width="3"/><circle cx="350" cy="148" r="8" fill="#595959" stroke="#cdcdcd" stroke-width="3"/><circle cx="330" cy="170" r="8" fill="#595959" stroke="#cdcdcd" stroke-width="3"/>
<path d="M302 245L332 232V285H302ZM342 232L371 245V285H342Z" class="t"/><path d="M337 220V296" stroke="#d4d4d4" stroke-width="4"/>
<path d="M310 380V340H355" fill="none" stroke="#c8c8c8" stroke-width="4"/>
<path d="M318 348H367V396H318Z" fill="none" stroke="#d4d4d4" stroke-width="5"/><path d="M342 348H360V374L351 367L342 374Z" class="t"/>
<circle cx="323" cy="508" r="8" fill="#242424"/><circle cx="307" cy="530" r="8" fill="#333"/><circle cx="363" cy="532" r="7" fill="#626262"/><circle cx="323" cy="553" r="7" fill="#444"/><circle cx="350" cy="553" r="7" fill="#3c3c3c"/>
</g>
</svg>
</body></html>
